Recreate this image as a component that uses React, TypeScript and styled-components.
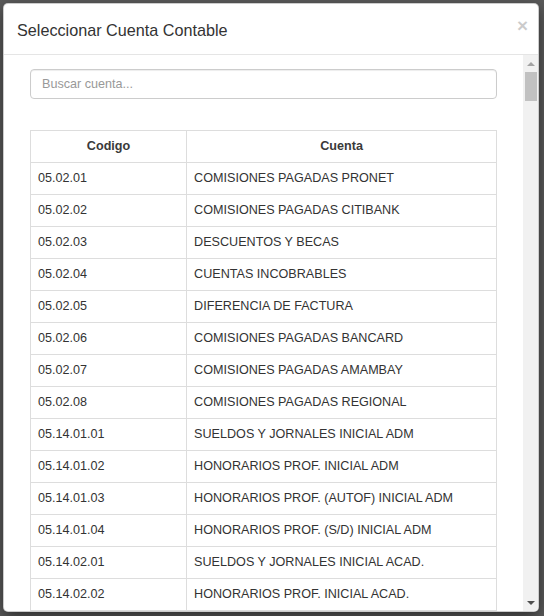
import React, { useState } from 'react';
import styled, { createGlobalStyle } from 'styled-components';

const GlobalStyle = createGlobalStyle`
  html, body {
    margin: 0;
    padding: 0;
    height: 100%;
    background: #5b5b5b;
    font-family: "Liberation Sans", Arial, Helvetica, sans-serif;
    font-size: 12.6px;
    color: #333;
  }
  * {
    box-sizing: border-box;
  }
`;

const Backdrop = styled.div`
  height: 616px;
  padding: 3px 5px 4px 3px;
  background: #5b5b5b;
`;

const Dialog = styled.div`
  display: flex;
  flex-direction: column;
  height: 609px;
  background: #fff;
  border: 1px solid rgba(0, 0, 0, 0.2);
  border-radius: 5px;
  box-shadow: 0 5px 15px rgba(0, 0, 0, 0.5);
  overflow: hidden;
`;

const Header = styled.div`
  display: flex;
  align-items: flex-start;
  justify-content: space-between;
  padding: 15px 10px 12px 13px;
  border-bottom: 1px solid #e5e5e5;
`;

const Title = styled.h4`
  margin: 0;
  font-size: 16.2px;
  font-weight: 400;
  line-height: 23px;
  color: #333;
`;

const Close = styled.button`
  margin-top: -2px;
  padding: 0;
  border: 0;
  background: transparent;
  font-family: inherit;
  font-size: 18.9px;
  font-weight: 700;
  line-height: 1;
  color: #000;
  opacity: 0.2;
  cursor: pointer;
`;

const Body = styled.div`
  flex: 1;
  display: flex;
  min-height: 0;
`;

const Content = styled.div`
  flex: 1;
  overflow: hidden;
  padding: 14px 26px 0 26px;
`;

const Scrollbar = styled.div`
  width: 15px;
  display: flex;
  flex-direction: column;
  background: #f1f1f1;
`;

const Arrow = styled.div<{ $down?: boolean }>`
  height: 17px;
  display: flex;
  align-items: center;
  justify-content: center;

  &::after {
    content: '';
    border-left: 4px solid transparent;
    border-right: 4px solid transparent;
    ${p => p.$down
      ? 'border-top: 4px solid #505050;'
      : 'border-bottom: 4px solid #a3a3a3;'}
  }
`;

const Track = styled.div`
  flex: 1;
  padding: 0 1px 0 2px;
`;

const Thumb = styled.div`
  height: 29px;
  background: #c1c1c1;
`;

const Search = styled.input`
  display: block;
  width: 100%;
  height: 30px;
  margin: 0 0 31px;
  padding: 5px 11px;
  border: 1px solid #ccc;
  border-radius: 4px;
  box-shadow: inset 0 1px 1px rgba(0, 0, 0, 0.075);
  font-family: inherit;
  font-size: 12.6px;
  color: #555;
  outline: none;

  &::placeholder {
    color: #999;
  }
`;

const Table = styled.table`
  width: 100%;
  table-layout: fixed;
  border-collapse: collapse;
  border-spacing: 0;
  border: 1px solid #ddd;
`;

const Th = styled.th<{ $width?: string }>`
  width: ${p => p.$width || 'auto'};
  padding: 7px;
  border: 1px solid #ddd;
  font-weight: 700;
  line-height: 17px;
  text-align: center;
  color: #3a3a3a;
`;

const Row = styled.tr`
  cursor: pointer;

  &:hover {
    background: #f5f5f5;
  }
`;

const Td = styled.td`
  padding: 7px;
  border: 1px solid #ddd;
  line-height: 17px;
  text-align: left;
  white-space: nowrap;
  overflow: hidden;
`;

type Cuenta = { codigo: string; nombre: string };

const cuentas: Cuenta[] = [
  { codigo: '05.02.01', nombre: 'COMISIONES PAGADAS PRONET' },
  { codigo: '05.02.02', nombre: 'COMISIONES PAGADAS CITIBANK' },
  { codigo: '05.02.03', nombre: 'DESCUENTOS Y BECAS' },
  { codigo: '05.02.04', nombre: 'CUENTAS INCOBRABLES' },
  { codigo: '05.02.05', nombre: 'DIFERENCIA DE FACTURA' },
  { codigo: '05.02.06', nombre: 'COMISIONES PAGADAS BANCARD' },
  { codigo: '05.02.07', nombre: 'COMISIONES PAGADAS AMAMBAY' },
  { codigo: '05.02.08', nombre: 'COMISIONES PAGADAS REGIONAL' },
  { codigo: '05.14.01.01', nombre: 'SUELDOS Y JORNALES INICIAL ADM' },
  { codigo: '05.14.01.02', nombre: 'HONORARIOS PROF. INICIAL ADM' },
  { codigo: '05.14.01.03', nombre: 'HONORARIOS PROF. (AUTOF) INICIAL ADM' },
  { codigo: '05.14.01.04', nombre: 'HONORARIOS PROF. (S/D) INICIAL ADM' },
  { codigo: '05.14.02.01', nombre: 'SUELDOS Y JORNALES INICIAL ACAD.' },
  { codigo: '05.14.02.02', nombre: 'HONORARIOS PROF. INICIAL ACAD.' },
];

export default function App() {
  const [query, setQuery] = useState('');
  const q = query.trim().toUpperCase();
  const visibles = q
    ? cuentas.filter(c => c.codigo.includes(q) || c.nombre.includes(q))
    : cuentas;

  return (
    <>
      <GlobalStyle />
      <Backdrop>
        <Dialog>
          <Header>
            <Title>Seleccionar Cuenta Contable</Title>
            <Close aria-label="Cerrar">×</Close>
          </Header>
          <Body>
            <Content>
              <Search
                type="text"
                placeholder="Buscar cuenta..."
                value={query}
                onChange={e => setQuery(e.target.value)}
              />
              <Table>
                <thead>
                  <tr>
                    <Th $width="33.5%">Codigo</Th>
                    <Th>Cuenta</Th>
                  </tr>
                </thead>
                <tbody>
                  {visibles.map(c => (
                    <Row key={c.codigo}>
                      <Td>{c.codigo}</Td>
                      <Td>{c.nombre}</Td>
                    </Row>
                  ))}
                  <Row>
                    <Td />
                    <Td />
                  </Row>
                </tbody>
              </Table>
            </Content>
            <Scrollbar>
              <Arrow />
              <Track>
                <Thumb />
              </Track>
              <Arrow $down />
            </Scrollbar>
          </Body>
        </Dialog>
      </Backdrop>
    </>
  );
}
